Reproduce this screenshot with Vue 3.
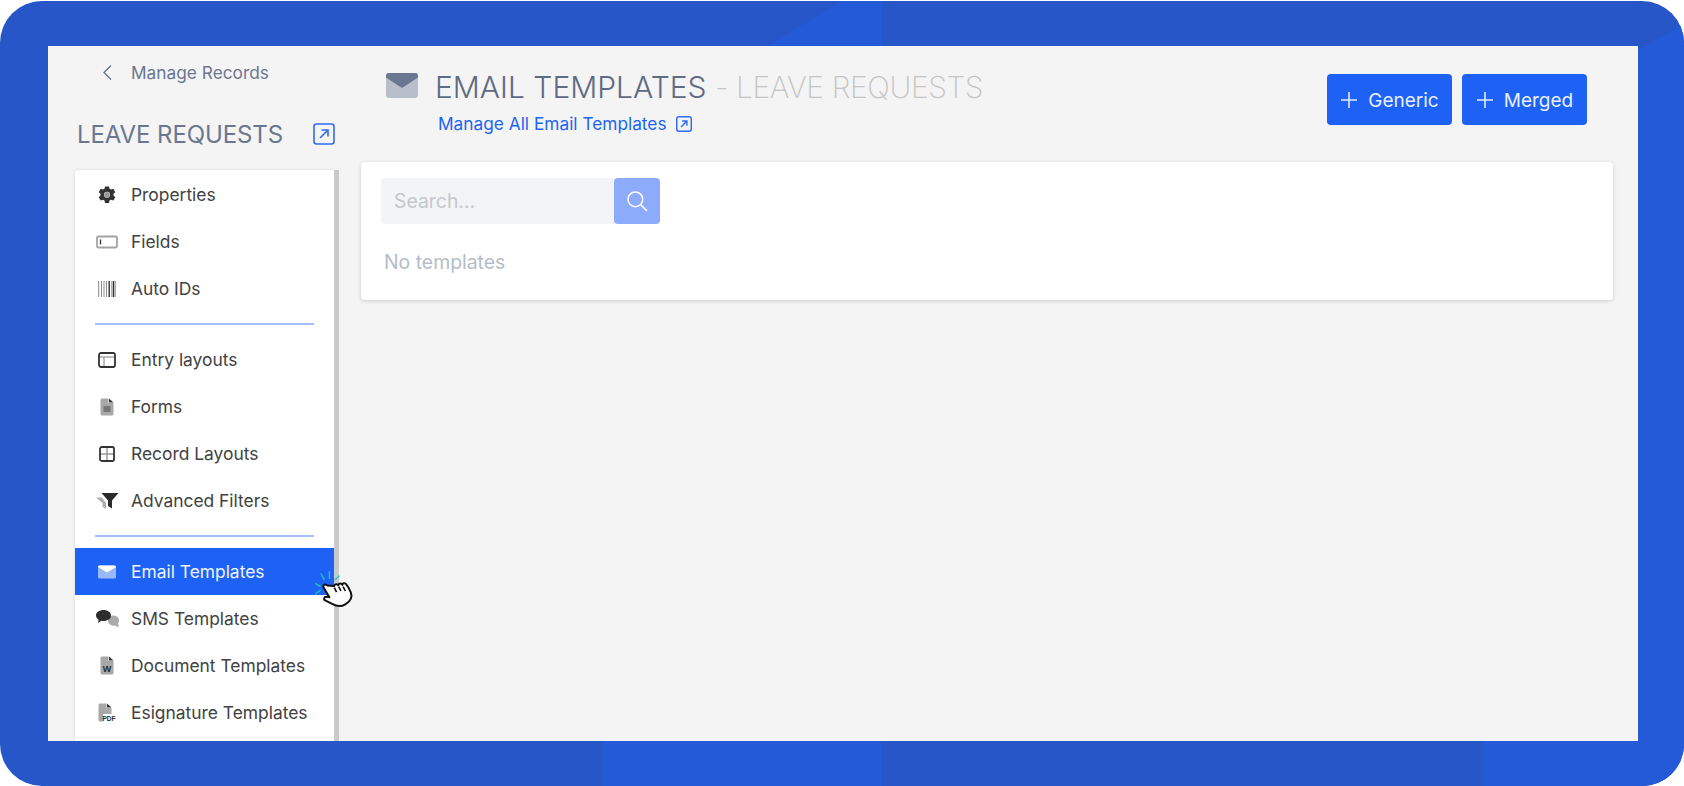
<script setup>
const groups = [
  [
    { label: 'Properties', icon: 'gear' },
    { label: 'Fields', icon: 'field' },
    { label: 'Auto IDs', icon: 'barcode' }
  ],
  [
    { label: 'Entry layouts', icon: 'entry' },
    { label: 'Forms', icon: 'form' },
    { label: 'Record Layouts', icon: 'record' },
    { label: 'Advanced Filters', icon: 'filter' }
  ],
  [
    { label: 'Email Templates', icon: 'mail', active: true },
    { label: 'SMS Templates', icon: 'sms' },
    { label: 'Document Templates', icon: 'doc' },
    { label: 'Esignature Templates', icon: 'pdf' }
  ]
]
</script>

<template>
  <div class="frame">
    <svg class="facets" width="1684" height="786" viewBox="0 0 1684 786" aria-hidden="true">
      <polygon points="767,46 842,1 881,1 881,46" fill="#2459d8" />
      <rect x="603" y="741" width="278" height="45" fill="#2459d8" />
      <rect x="1484" y="741" width="200" height="45" fill="#2459d8" />
      <polygon points="1638,50 1684,24 1684,786 1638,786" fill="#2459d8" />
    </svg>
    <div class="window">
      <aside class="side">
        <a class="back">
          <svg width="11" height="17" viewBox="0 0 11 17"><path d="M9 1.5 2 8.5l7 7" fill="none" stroke="#64748b" stroke-width="1.3" /></svg>
          <span>Manage Records</span>
        </a>
        <div class="side-title">
          <h2>LEAVE REQUESTS</h2>
          <svg width="22" height="22" viewBox="0 0 22 22"><rect x="1" y="1" width="20" height="20" rx="2.5" fill="none" stroke="#2f6bf5" stroke-width="1.6" /><path d="M7 15 15 7M8.5 7H15v6.5" fill="none" stroke="#2f6bf5" stroke-width="1.6" /></svg>
        </div>
        <nav class="card-nav">
          <div class="nav-list">
            <template v-for="(group, g) in groups" :key="g">
              <div v-if="g" class="divider"></div>
              <a v-for="item in group" :key="item.label" class="nav-item" :class="{ active: item.active }">
                <span class="nav-icon">
                  <svg v-if="item.icon === 'gear'" width="20" height="20" viewBox="0 0 20 20">
                    <path fill="#333" fill-rule="evenodd" d="M8 1.5h4l.5 2.3 1.5.8 2.3-.8 2 3.4-1.8 1.6v1.8l1.8 1.6-2 3.4-2.3-.8-1.5.8-.5 2.4H8l-.5-2.4-1.5-.8-2.3.8-2-3.4L3.500 10.600V8.800L1.700 7.200l2-3.400 2.300.8 1.500-.8zM10 6.800a3 3 0 1 0 0 6 3 3 0 0 0 0-6z" />
                    <circle cx="10" cy="9.800" r="2.800" fill="#999" />
                  </svg>
                  <svg v-else-if="item.icon === 'field'" width="22" height="14" viewBox="0 0 22 14">
                    <rect x="1" y="1.500" width="20" height="11" rx="1.500" fill="none" stroke="#a3a3a3" stroke-width="1.800" />
                    <path d="M4.500 4.500v5" stroke="#333" stroke-width="1.300" />
                  </svg>
                  <svg v-else-if="item.icon === 'barcode'" width="18" height="16" viewBox="0 0 18 16">
                    <path d="M.7 0v16M3.500 0v16M6 0v16M8.500 0v16M13.800 0v16M17.200 0v16" stroke="#8d8d8d" stroke-width="1" />
                    <path d="M11.200 0v16M15.500 0v16" stroke="#333" stroke-width="1.400" />
                  </svg>
                  <svg v-else-if="item.icon === 'entry'" width="18" height="16" viewBox="0 0 18 16">
                    <path d="M1 5h16M6 5v10" stroke="#aaa" stroke-width="1.500" fill="none" />
                    <rect x="1" y="1" width="16" height="14" rx="2" fill="none" stroke="#333" stroke-width="1.800" />
                  </svg>
                  <svg v-else-if="item.icon === 'form'" width="14" height="18" viewBox="0 0 14 18">
                    <path d="M2 .500h6.500v4.500H13.500V16a1.500 1.500 0 0 1-1.500 1.500H2A1.500 1.500 0 0 1 .500 16V2A1.500 1.500 0 0 1 2 .500z" fill="#a8a8a8" />
                    <path d="M9 .500 13.500 4.500H9z" fill="#333" />
                    <rect x="3.500" y="8" width="7" height="6" fill="#777" />
                  </svg>
                  <svg v-else-if="item.icon === 'record'" width="16" height="16" viewBox="0 0 16 16">
                    <path d="M8 1v14M1 8h14" stroke="#999" stroke-width="1.500" />
                    <rect x="1" y="1" width="14" height="14" rx="1.800" fill="none" stroke="#333" stroke-width="1.800" />
                  </svg>
                  <svg v-else-if="item.icon === 'filter'" width="23" height="16" viewBox="0 0 23 16">
                    <path d="M0 4.500h6l4 5.500v6L6.500 14V10z" fill="#b0b0b0" />
                    <path d="M5.500 0H22.500L16 7.500V15.500L12 13V7.500z" fill="#2b2b2b" />
                  </svg>
                  <svg v-else-if="item.icon === 'mail'" width="18" height="14" viewBox="0 0 18 14">
                    <rect y=".500" width="18" height="13" rx="1.500" fill="#fff" fill-opacity=".55" />
                    <path d="M0 2A1.500 1.500 0 0 1 1.500 .500h15A1.500 1.500 0 0 1 18 2L9 7.500z" fill="#fff" />
                  </svg>
                  <svg v-else-if="item.icon === 'sms'" width="23" height="18" viewBox="0 0 23 18">
                    <path d="M12 10.500a5.500 4.800 0 1 1 10 2.500l.7 4.500-3.700-2a5.500 4.800 0 0 1-7-5z" fill="#aaa" />
                    <path d="M7.500 0C11.600 0 15 2.300 15 5.500S11.600 11 7.500 11c-.8 0-1.500-.1-2.200-.2L2 13l.6-3.500C1 8.500 0 7.100 0 5.500 0 2.300 3.400 0 7.500 0z" fill="#2e2e2e" />
                  </svg>
                  <svg v-else-if="item.icon === 'doc'" width="14" height="19" viewBox="0 0 14 19">
                    <path d="M2 .500h6.500v4.500H13.500V17a1.500 1.500 0 0 1-1.500 1.500H2A1.500 1.500 0 0 1 .500 17V2A1.500 1.500 0 0 1 2 .500z" fill="#a8a8a8" />
                    <path d="M9 .500 13.500 4.500H9z" fill="#333" />
                    <text x="7" y="15.500" text-anchor="middle" class="glyph glyph-w">W</text>
                  </svg>
                  <svg v-else-if="item.icon === 'pdf'" width="18" height="19" viewBox="0 0 18 19">
                    <path d="M2 .500h6.500v4.500H13.500V11H5v7.500H2A1.500 1.500 0 0 1 .500 17V2A1.500 1.500 0 0 1 2 .500z" fill="#a8a8a8" />
                    <path d="M9 .500 13.500 4.500H9z" fill="#333" />
                    <text x="11" y="18" text-anchor="middle" class="glyph glyph-pdf">PDF</text>
                  </svg>
                </span>
                <span>{{ item.label }}</span>
              </a>
            </template>
          </div>
          <div class="scroll-thumb"></div>
          <svg class="cursor" width="46" height="40" viewBox="0 0 42 36" aria-hidden="true">
            <path d="M2 11 7 14M7 2l3.500 6M15 0v7M24 4l-4 4M2 21l5-4" fill="none" stroke="#1fc7b4" stroke-width="1.200" />
            <path d="M13 13c-1.500-2-4.500-.5-3.300 1.700l5.300 9-2.500-.5c-2.500-.3-3.200 2.700-1 3.500l6 3c3 1.800 8 3 12 .5 4-2.500 7-6 5-11-1-2.500-3-6-4.500-7.700-1.300-1.300-3.200-.5-3.200 1-.7-1.800-3.400-1.700-3.800.3-.9-1.700-3.500-1.200-3.700.7z" fill="#fff" stroke="#111" stroke-width="1.800" stroke-linejoin="round" />
            <path d="M19.500 15l2 4M23.500 14l2 4M27.500 14l2 4" stroke="#111" stroke-width="1.500" fill="none" />
          </svg>
        </nav>
      </aside>

      <main class="main">
        <header class="head">
          <svg class="head-mail" width="32" height="25" viewBox="0 0 32 25">
            <rect width="32" height="25" rx="3" fill="#b9bfca" />
            <path d="M0 3a3 3 0 0 1 3-3h26a3 3 0 0 1 3 3v1.500L16 15 0 4.500z" fill="#6b7690" />
          </svg>
          <div class="head-text">
            <h1>EMAIL TEMPLATES <span>- LEAVE REQUESTS</span></h1>
            <a class="manage">
              Manage All Email Templates
              <svg width="16" height="16" viewBox="0 0 22 22"><rect x="1" y="1" width="20" height="20" rx="3" fill="none" stroke="#2f6bf5" stroke-width="2" /><path d="M7 15 15 7M8.500 7H15v6.500" fill="none" stroke="#2f6bf5" stroke-width="2" /></svg>
            </a>
          </div>
          <div class="actions">
            <button class="btn"><svg width="18" height="18" viewBox="0 0 18 18"><path d="M9 1v16M1 9h16" stroke="#e6edff" stroke-width="1.600" /></svg><span>Generic</span></button>
            <button class="btn"><svg width="18" height="18" viewBox="0 0 18 18"><path d="M9 1v16M1 9h16" stroke="#e6edff" stroke-width="1.600" /></svg><span>Merged</span></button>
          </div>
        </header>
        <section class="panel">
          <div class="search">
            <div class="search-input">Search...</div>
            <div class="search-btn">
              <svg width="22" height="22" viewBox="0 0 20 20"><circle cx="8.500" cy="8.500" r="6.700" fill="none" stroke="#fff" stroke-width="1.400" /><path d="m13.500 13.500 5.500 5.500" stroke="#fff" stroke-width="1.400" /></svg>
            </div>
          </div>
          <p class="empty">No templates</p>
        </section>
      </main>
    </div>
  </div>
</template>

<style>
html, body { margin: 0; background: #fff; overflow: hidden; }
</style>

<style scoped>
.frame {
  position: relative;
  box-sizing: border-box;
  width: 1684px;
  height: 785px;
  margin-top: 1px;
  padding: 45px 46px 45px 48px;
  border-radius: 42px;
  background: #2656c8;
  overflow: hidden;
  font-family: Inter, "Noto Sans", sans-serif;
}
.facets { position: absolute; left: 0; top: -1px; }
.window {
  position: relative;
  display: flex;
  height: 695px;
  background: #f4f4f4;
  overflow: hidden;
}
.side {
  width: 313px;
  flex: none;
  box-sizing: border-box;
  padding-left: 27px;
  display: flex;
  flex-direction: column;
}
.back {
  display: flex;
  align-items: center;
  gap: 18px;
  margin: 16px 0 0 27px;
  height: 20px;
  font-size: 17.300px;
  color: #6b7790;
}
.side-title {
  display: flex;
  align-items: center;
  justify-content: space-between;
  width: 260px;
  margin: 35px 0 0 0;
  height: 34px;
  padding-left: 2px;
  box-sizing: border-box;
}
.side-title h2 {
  margin: 0;
  font-size: 24px;
  font-weight: 400;
  letter-spacing: -.1px;
  color: #6b7790;
}
.card-nav {
  position: relative;
  flex: 1;
  display: flex;
  margin-top: 19px;
  width: 265px;
  box-sizing: border-box;
  min-height: 0;
}
.nav-list {
  width: 259px;
  flex: none;
  background: #fff;
  box-shadow: 0 0 3px rgba(0,0,0,.14);
  border-radius: 3px 0 0 0;
  padding-top: 1px;
  overflow: hidden;
}
.scroll-thumb { width: 5px; background: #c9c9c9; }
.nav-item {
  display: flex;
  align-items: center;
  height: 47px;
  font-size: 17.400px;
  color: #424242;
}
.nav-item.active {
  background: #1d62f5;
  color: #f0f4ff;
}
.nav-icon {
  width: 56px;
  flex: none;
  display: flex;
  justify-content: center;
  box-sizing: border-box;
  padding-left: 8px;
}
.divider {
  height: 2px;
  background: #a3bffa;
  margin: 11px 20px;
}
.glyph { font-family: "Liberation Sans", sans-serif; font-weight: 700; fill: #2b2b2b; }
.glyph-w { font-size: 9px; }
.glyph-pdf { font-size: 6.500px; }
.cursor { position: absolute; left: 238px; top: 401px; }

.main { flex: 1; min-width: 0; padding: 0 25px 0 0; box-sizing: border-box; }
.head {
  display: flex;
  align-items: flex-start;
  height: 116px;
  box-sizing: border-box;
}
.head-mail { margin: 27px 0 0 25px; flex: none; }
.head-text { margin-left: 17px; flex: 1; }
.head-text h1 {
  margin: 21px 0 0;
  font-size: 30px;
  line-height: 40px;
  font-weight: 300;
  color: #5f6a83;
}
.head-text h1 span { color: #c4c4c4; font-weight: 200; letter-spacing: -.4px; }
.manage {
  display: flex;
  align-items: center;
  gap: 9px;
  margin: 6px 0 0 3px;
  font-size: 17.300px;
  color: #2065f5;
}
.actions { display: flex; gap: 10px; margin: 28px 26px 0 0; }
.btn {
  display: flex;
  align-items: center;
  gap: 10px;
  height: 51px;
  width: 125px;
  box-sizing: border-box;
  justify-content: center;
  border: 0;
  border-radius: 4px;
  background: #1d62f5;
  color: #e8efff;
  font: 400 19px Inter, sans-serif;
}
.btn span { position: relative; top: 1px; }
.panel {
  height: 138px;
  box-sizing: border-box;
  background: #fff;
  border-radius: 4px;
  padding: 16px 20px;
  box-shadow: 0 1px 4px rgba(0,0,0,.16);
}
.search { display: flex; width: 279px; height: 46px; }
.search-input {
  flex: 1;
  display: flex;
  align-items: center;
  padding-left: 13px;
  background: #f3f4f6;
  border-radius: 4px 0 0 4px;
  color: #c4c7cc;
  font-size: 19.400px;
}
.search-btn {
  width: 46px;
  display: flex;
  align-items: center;
  justify-content: center;
  background: #8dabfb;
  border-radius: 4px;
}
.empty {
  margin: 26px 0 0 3px;
  font-size: 19.400px;
  line-height: 24px;
  color: #b6bcc7;
}
</style>
